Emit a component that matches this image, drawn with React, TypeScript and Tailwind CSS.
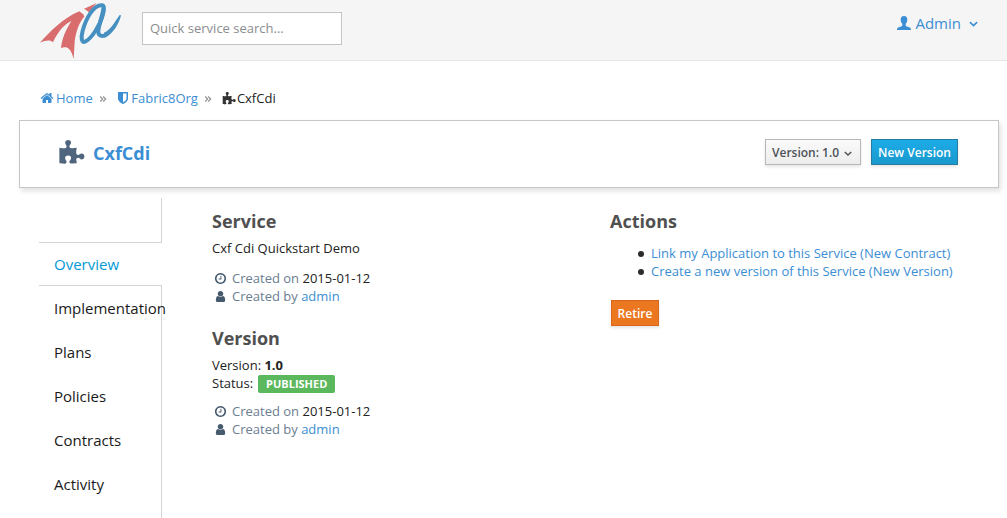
import React from "react";

const paths = {
  home: "M1472 992v480q0 26-19 45t-45 19h-384v-384h-256v384h-384q-26 0-45-19t-19-45v-480q0-1 .5-3t.5-3l575-474 575 474q1 2 1 6zm223-69l-62 74q-8 9-21 11h-3q-13 0-21-7l-692-577-692 577q-12 8-24 7-13-2-21-11l-62-74q-8-10-7-23.5t11-21.5l719-599q32-26 76-26t76 26l244 204v-195q0-14 9-23t23-9h192q14 0 23 9t9 23v408l219 182q10 8 11 21.5t-7 23.5z",
  shield: "M1344 960v-640h-448v1137q119-63 213-137 235-184 235-360zm192-768v768q0 86-33.5 170.5t-83 150-118 127.5-126.5 103-121 77.5-89.5 49.5-42.5 20q-12 6-26 6t-26-6q-16-7-42.5-20t-89.5-49.5-121-77.5-126.5-103-118-127.5-83-150-33.5-170.5v-768q0-26 19-45t45-19h1152q26 0 45 19t19 45z",
  clock: "M1024 544v448q0 14-9 23t-23 9h-320q-14 0-23-9t-9-23v-64q0-14 9-23t23-9h224v-352q0-14 9-23t23-9h64q14 0 23 9t9 23zm416 352q0-148-73-273t-198-198-273-73-273 73-198 198-73 273 73 273 198 198 273 73 273-73 198-198 73-273zm224 0q0 209-103 385.5t-279.5 279.5-385.5 103-385.5-103-279.5-279.5-103-385.5 103-385.5 279.5-279.5 385.5-103 385.5 103 279.5 279.5 103 385.5z",
  user: "M1536 1399q0 109-62.5 187t-150.5 78h-854q-88 0-150.5-78t-62.5-187q0-85 8.5-160.5t31.5-152 58.5-131 94-89 134.5-34.5q131 128 313 128t313-128q76 0 134.5 34.5t94 89 58.5 131 31.5 152 8.5 160.5zm-256-887q0 159-112.5 271.5t-271.5 112.5-271.5-112.5-112.5-271.5 112.5-271.5 271.5-112.5 271.5 112.5 112.5 271.5z",
  puzzle: "M1755 1098q0 81-44.5 135t-123.5 54q-41 0-77.5-17.5t-59-38-56.5-38-71-17.5q-110 0-110 124 0 39 16 115t15 115v5q-22 0-33 1-34 3-97.5 11.5t-115.5 13.5-98 5q-61 0-103-26.5t-42-83.5q0-37 17.5-71t38-56.5 38-59 17.5-77.5q0-79-54-123.5t-135-44.5q-84 0-143 45.5t-59 127.5q0 43 15 83t33.5 64.5 33.5 53 15 50.5q0 45-46 89-37 35-117 35-95 0-245-24-9-2-27.5-4t-27.5-4l-13-2q-1 0-3-1-2 0-2-1v-1024q2 1 17.5 3.5t34 5 21.5 3.5q150 24 245 24 80 0 117-35 46-44 46-89 0-22-15-50.5t-33.5-53-33.5-64.5-15-83q0-82 59-127.5t144-45.5q80 0 134 44.5t54 123.5q0 41-17.5 77.5t-38 59-38 56.5-17.5 71q0 57 42 83.5t103 26.5q64 0 180-15t163-17v2q-1 2-3.5 17.5t-5 34-3.5 21.5q-24 150-24 245 0 80 35 117 44 46 89 46 22 0 50.5-15t53-33.5 64.5-33.5 83-15q82 0 127.5 59t45.5 143z",
};

function Icon({ name, className }: { name: keyof typeof paths; className: string }) {
  return (
    <svg viewBox="0 0 1792 1792" fill="currentColor" className={"shrink-0 " + className}>
      <path d={paths[name]} />
    </svg>
  );
}

function Chevron({ className }: { className: string }) {
  return (
    <svg viewBox="0 0 10 6" fill="none" stroke="currentColor" strokeWidth="1.8" className={"shrink-0 " + className}>
      <path d="M1 1l4 3.8L9 1" />
    </svg>
  );
}

function Logo() {
  return (
    <svg viewBox="0 0 330 183" className="h-[61px] w-[110px] shrink-0" fill="none">
      <path fill="#d96d6d" d="M30 128C58 96 100 54 148 34L160 43L163 50C146 67 137 100 134 125L131 176C126 160 122 148 112 143C105 140 98 142 93 145C96 115 108 88 124 63C98 76 81 101 69 127C62 119 48 120 30 128Z" />
      <path fill="#d96d6d" d="M161 27L200 9L176 37C173 33 168 29 161 27Z" />
      <g stroke="#468fc1" strokeWidth="12" strokeLinecap="round">
        <path d="M216 16C190 14 168 56 158 92C152 114 155 129 165 125C184 117 211 75 219 43C223 27 223 17 216 16Z" />
        <path d="M220 26C217 50 203 83 205 98C207 110 220 110 230 103" />
      </g>
      <path fill="#468fc1" d="M222 98C242 90 254 66 269 45L273 46C269 66 250 105 222 113Z" />
    </svg>
  );
}

function Separator() {
  return (
    <svg viewBox="0 0 8 8" className="mt-0.5 h-2 w-2" fill="none" stroke="#8f8f8f" strokeWidth="1.1">
      <path d="M1.2 1.5L3.7 4 1.2 6.5M4.2 1.5L6.7 4 4.2 6.500" />
    </svg>
  );
}

function Created() {
  return (
    <div className="text-[#6b7d91]">
      <div className="flex h-[18px] items-center">
        <Icon name="clock" className="ml-0.5 mr-[5px] h-[13px] w-[13px] text-[#465a6e]" />
        <span>Created on <span className="text-[#222]">2015-01-12</span></span>
      </div>
      <div className="flex h-[18px] items-center">
        <Icon name="user" className="ml-0.5 mr-[5px] h-[13px] w-[13px] text-[#465a6e]" />
        <span>Created by <a className="text-[#3b8ed3]">admin</a></span>
      </div>
    </div>
  );
}

const tabs = ["Implementation", "Plans", "Policies", "Contracts", "Activity"];

const actions = [
  "Link my Application to this Service (New Contract)",
  "Create a new version of this Service (New Version)",
];

export default function App() {
  return (
    <div className="h-[518px] w-[1007px] overflow-hidden bg-white font-['Open_Sans',sans-serif] text-[13px] leading-[18px] text-[#222]">
      <header className="flex h-[61px] border-b border-[#e7e7e7] bg-[#f5f5f5] pl-[30px]">
        <Logo />
        <div className="ml-0.5 mt-3 flex h-[33px] w-[200px] items-center border border-[#c4c4c4] bg-white px-[7px] pb-px text-[#8b8d8f]">
          Quick service search...
        </div>
        <div className="ml-auto mr-[29px] mt-[13px] flex h-5 items-center text-[15px] text-[#3b8ed3]">
          <svg viewBox="0 0 14 14" className="mr-1 h-3.5 w-3.5" fill="currentColor">
            <path d="M7 0C4.8 0 3.7 1.4 3.7 3.5c0 1.8.5 3.4 1.6 4.3v1.4c0 .7-.5 1-1.3 1.3L1.3 11.400C.4 11.800 0 12.500 0 14h14c0-1.500-.4-2.200-1.300-2.600L10 10.500c-.8-.3-1.300-.6-1.300-1.300V7.800c1.100-.9 1.600-2.500 1.600-4.300C10.300 1.400 9.200 0 7 0Z" />
          </svg>
          Admin
          <Chevron className="ml-2 mt-0.5 h-[6px] w-[9px]" />
        </div>
      </header>

      <nav className="mt-7 flex h-[18px] items-center pl-10 text-[#3b8ed3]">
        <Icon name="home" className="mr-0.5 h-[14px] w-[14px]" />
        <a>Home</a>
        <span className="ml-1.5 mr-[9px]"><Separator /></span>
        <Icon name="shield" className="h-[14px] w-[14px]" />
        <a className="ml-[1.5px]">Fabric8Org</a>
        <span className="ml-1.5 mr-2.5"><Separator /></span>
        <Icon name="puzzle" className="mr-px mt-px h-[14px] w-[14px] text-[#333]" />
        <span className="text-[#222]">CxfCdi</span>
      </nav>

      <section className="ml-[19px] mt-[13px] flex h-[68px] w-[980px] border border-[#c6c6c6] bg-white pl-[38px] pr-10 shadow-[2px_3px_5px_rgba(0,0,0,0.12)]">
        <Icon name="puzzle" className="mt-[19px] h-[27px] w-[27px] text-[#50667f]" />
        <h1 className="ml-2 mt-5 text-[18px] font-bold leading-6 text-[#3b8ed3]">CxfCdi</h1>
        <button className="ml-auto mt-[18px] flex h-[26px] w-24 items-center border border-[#b7b7b7] bg-linear-to-b from-[#fafafa] to-[#ededed] pl-1.5 pt-px text-[12px] font-semibold text-[#4d5258] shadow-[0_2px_3px_rgba(0,0,0,0.1)]">
          Version: 1.0
          <Chevron className="ml-[5px] mt-px h-[5px] w-2" />
        </button>
        <button className="ml-2.5 mt-[18px] h-[26px] w-[87px] whitespace-nowrap border border-[#267da1] bg-linear-to-b from-[#1cace8] to-[#1998cc] pt-px text-[12px] font-semibold text-white shadow-[0_2px_3px_rgba(0,0,0,0.1)]">
          New Version
        </button>
      </section>

      <main className="flex">
        <aside className="ml-[39px] mt-[10px] w-[123px] text-[15px] text-[#1a1a1a]">
          <div className="h-[45px] border-b border-r border-[#d4d4d4]" />
          <div className="flex h-[42px] items-center pl-[15px] text-[#0099d3]">Overview</div>
          <ul className="h-[240px] border-r border-t border-[#d4d4d4] pl-[15px]">
            {tabs.map((tab) => (
              <li key={tab} className="flex h-11 items-center whitespace-nowrap">{tab}</li>
            ))}
          </ul>
        </aside>

        <section className="ml-[50px] w-[399px] pt-[21px]">
          <h2 className="text-[18px] font-bold leading-6 text-[#505050]">Service</h2>
          <p className="mb-3 mt-1.5">Cxf Cdi Quickstart Demo</p>
          <Created />
          <h2 className="mt-[21px] text-[18px] font-bold leading-6 text-[#505050]">Version</h2>
          <div className="mt-1.5">Version: <b>1.0</b></div>
          <div className="mb-2.5 flex h-[18px] items-center">
            Status:
            <span className="ml-[5px] mt-0.5 flex h-[18px] w-[77px] items-center justify-center rounded-xs bg-[#5cb85c] text-[11px] font-bold text-white">PUBLISHED</span>
          </div>
          <Created />
        </section>

        <section className="-ml-px pt-[21px]">
          <h2 className="text-[18px] font-bold leading-6 text-[#505050]">Actions</h2>
          <ul className="mt-[11px] text-[#3b8ed3]">
            {actions.map((label) => (
              <li key={label} className="flex items-center pl-7">
                <span className="mr-[7px] mt-0.5 h-1.5 w-1.5 rounded-full bg-[#2b2b2b]" />
                <a>{label}</a>
              </li>
            ))}
          </ul>
          <button className="ml-px mt-5 flex h-[26px] w-12 items-center justify-center border border-[#d9661b] bg-[#eb7720] pt-px text-[12px] font-semibold text-white shadow-[0_2px_3px_rgba(0,0,0,0.1)]">
            Retire
          </button>
        </section>
      </main>
    </div>
  );
}
